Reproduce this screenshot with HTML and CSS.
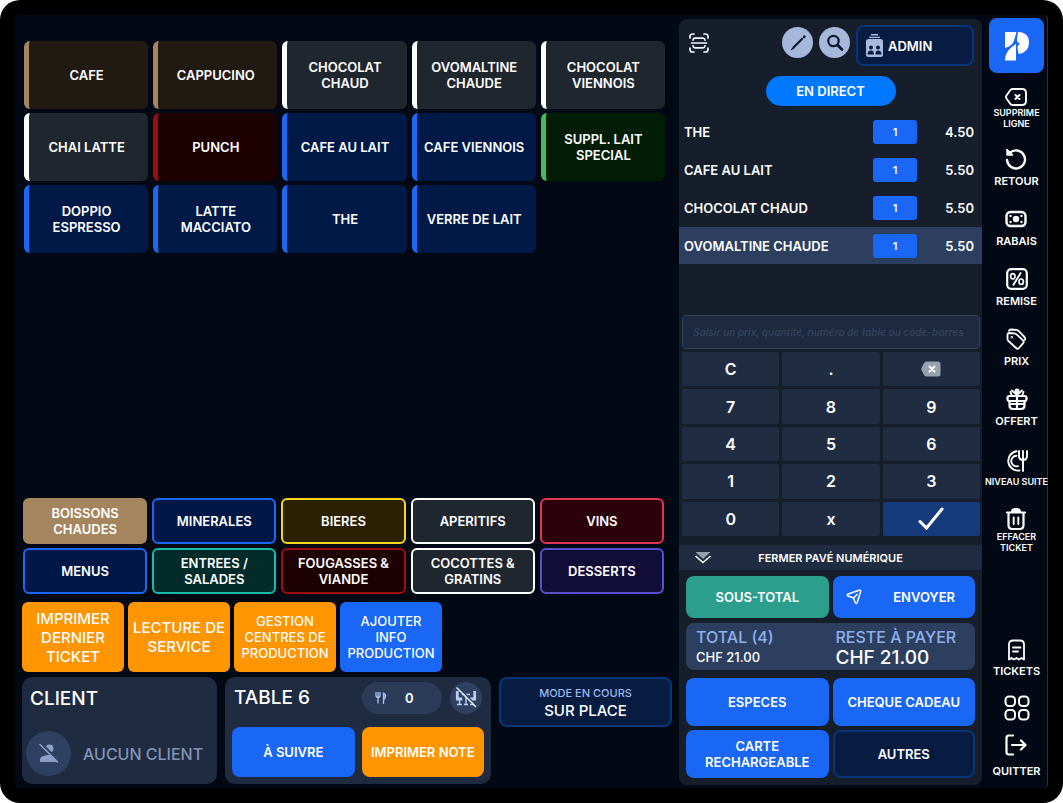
FILE: index.html
```html
<!DOCTYPE html>
<html lang="fr">
<head>
<meta charset="utf-8">
<meta name="viewport" content="width=device-width, initial-scale=1">
<title>Caisse</title>
<link rel="stylesheet" href="styles.css">
</head>
<body>
<div class="device">
<div class="screen">

<main class="work">
  <div class="products">
    <button class="product brown">CAFE</button>
    <button class="product brown">CAPPUCINO</button>
    <button class="product white">CHOCOLAT<br>CHAUD</button>
    <button class="product white">OVOMALTINE<br>CHAUDE</button>
    <button class="product white">CHOCOLAT<br>VIENNOIS</button>
    <button class="product white">CHAI LATTE</button>
    <button class="product red">PUNCH</button>
    <button class="product blue">CAFE AU LAIT</button>
    <button class="product blue">CAFE VIENNOIS</button>
    <button class="product green">SUPPL. LAIT<br>SPECIAL</button>
    <button class="product blue">DOPPIO<br>ESPRESSO</button>
    <button class="product blue">LATTE<br>MACCIATO</button>
    <button class="product blue">THE</button>
    <button class="product blue">VERRE DE LAIT</button>
  </div>

  <nav class="categories">
    <button class="category active">BOISSONS<br>CHAUDES</button>
    <button class="category blue">MINERALES</button>
    <button class="category yellow">BIERES</button>
    <button class="category white">APERITIFS</button>
    <button class="category pink">VINS</button>
    <button class="category blue">MENUS</button>
    <button class="category teal">ENTREES /<br>SALADES</button>
    <button class="category red">FOUGASSES &amp;<br>VIANDE</button>
    <button class="category white">COCOTTES &amp;<br>GRATINS</button>
    <button class="category violet">DESSERTS</button>
  </nav>

  <div class="actions">
    <button class="action large">IMPRIMER<br>DERNIER<br>TICKET</button>
    <button class="action large">LECTURE DE<br>SERVICE</button>
    <button class="action">GESTION<br>CENTRES DE<br>PRODUCTION</button>
    <button class="action info">AJOUTER<br>INFO<br>PRODUCTION</button>
  </div>

  <div class="context">
    <section class="card client">
      <h2>CLIENT</h2>
      <div class="client-row">
        <span class="avatar">
          <svg width="22" height="22" viewBox="0 0 22 22"><circle cx="11.500" cy="5.500" r="4" fill="#8ba0c6"/><path d="M2 19v-2.500c0-3 5-4.500 9-4.500s9 1.500 9 4.500V19z" fill="#8ba0c6"/><path d="M3 0l18 18" stroke="#2f4160" stroke-width="2"/><path d="M1.500 1l18.500 18.500" stroke="#8ba0c6" stroke-width="1.500"/></svg>
        </span>
        <span class="muted">AUCUN CLIENT</span>
      </div>
    </section>
    <section class="card table-card">
      <div class="table-head">
        <h2>TABLE 6</h2>
        <button class="covers">
          <svg width="12" height="12" viewBox="0 0 12 12" fill="none" stroke="#a9c3ea" stroke-width="1.300"><path d="M1 0v3.500q0 2 2 2t2-2V0M3 0v11.500"/><path d="M8.500 12V1q2.500 1 2 3.500-.2 2.500-2 3" fill="#7691bd"/></svg>
          <span>0</span>
        </button>
        <button class="round" aria-label="Libérer la table">
          <svg width="22" height="22" viewBox="0 0 22 22" fill="none" stroke="#b9cdf0"><path d="M2.300 4v8h5M19.700 4v8h-5" stroke-width="2.800"/><path d="M4.500 12v5M2 17.500h5M17.500 12v5M15 17.500h5M7 7.500h8M11 7.500v10M9 17.500h4" stroke-width="1.400"/><path d="M3 0l19 19" stroke="#2f4160" stroke-width="1.500"/><path d="M1.500 0.500l19.500 19.500" stroke="#e5eeff" stroke-width="1.500"/></svg>
        </button>
      </div>
      <div class="table-actions">
        <button class="primary">À SUIVRE</button>
        <button class="primary orange">IMPRIMER NOTE</button>
      </div>
    </section>
    <button class="mode"><span class="mode-label">MODE EN COURS</span><span>SUR PLACE</span></button>
  </div>
</main>

<section class="order">
  <header class="order-head">
    <button class="scan" aria-label="Scanner">
      <svg width="20" height="20" viewBox="0 0 20 20" fill="none" stroke="#f4f8ff" stroke-width="1.700" stroke-linecap="round"><path d="M1 5V3.500q0-2.500 2.500-2.500H5M15 1h1.500q2.500 0 2.500 2.500V5M19 15v1.500q0 2.500-2.500 2.500H15M5 19H3.500q-2.500 0-2.500-2.500V15M2.500 10h15"/><path d="M4 7.200q.3-2 2-2h8q1.700 0 2 2M4 12.800q.3 2 2 2h8q1.700 0 2-2"/></svg>
    </button>
    <button class="tool" aria-label="Modifier">
      <svg width="18" height="18" viewBox="0 0 18 18" stroke="#10192b" stroke-linecap="round"><path d="M4.500 13.500L13 5" stroke-width="2.200"/><path d="M15 3l.4-.4" stroke-width="2.600"/><path d="M2.500 15.500l2-1.500" stroke-width="1.400"/></svg>
    </button>
    <button class="tool" aria-label="Rechercher">
      <svg width="18" height="18" viewBox="0 0 18 18" fill="none" stroke="#10192b" stroke-width="2.200" stroke-linecap="round"><circle cx="7.500" cy="7" r="5.200"/><path d="M11.500 11l4.500 4.500" stroke-width="2.800"/></svg>
    </button>
    <button class="admin">
      <svg width="17" height="23" viewBox="0 0 17 23"><path d="M5 .8h7M3 3.400h11" stroke="#a8bbdf" stroke-width="1.400"/><rect x="0" y="5" width="17" height="18" rx="2.500" fill="#a8bbdf"/><g fill="#0a1c40"><circle cx="5" cy="13.500" r="2"/><circle cx="12" cy="13.500" r="2"/><path d="M1.500 20.500q0-4 3.500-4 2.600 0 3 3v1zM9.500 20.500v-1q.3-3 2.700-3 3.300 0 3.300 4z"/></g></svg>
      <span>ADMIN</span>
    </button>
  </header>
  <button class="direct">EN DIRECT</button>
  <table class="lines">
    <tbody>
      <tr><td>THE</td><td class="qty"><button>1</button></td><td class="price">4.50</td></tr>
      <tr><td>CAFE AU LAIT</td><td class="qty"><button>1</button></td><td class="price">5.50</td></tr>
      <tr><td>CHOCOLAT CHAUD</td><td class="qty"><button>1</button></td><td class="price">5.50</td></tr>
      <tr class="selected"><td>OVOMALTINE CHAUDE</td><td class="qty"><button>1</button></td><td class="price">5.50</td></tr>
    </tbody>
  </table>

  <div class="pad">
    <input class="entry" type="text" aria-label="Saisie" placeholder="Saisir un prix, quantité, numéro de table ou code-barres">
    <div class="keys">
      <button>C</button><button>.</button>
      <button aria-label="Effacer"><svg width="20" height="16" viewBox="0 0 20 16"><path d="M5.500.5H17q2.500 0 2.500 2.500v10q0 2.500-2.500 2.500H5.500Q3.500 15.500 2 12L.5 9q-.5-1 0-2L2 4Q3.500.5 5.500.5z" fill="#98a1ae"/><path d="M8.500 5.500l5 5M13.500 5.500l-5 5" stroke="#fff" stroke-width="2" stroke-linecap="round"/></svg></button>
      <button>7</button><button>8</button><button>9</button>
      <button>4</button><button>5</button><button>6</button>
      <button>1</button><button>2</button><button>3</button>
      <button>0</button><button>x</button>
      <button class="ok" aria-label="Valider"><svg width="26" height="24" viewBox="0 0 26 24"><path d="M2 14.500l6.500 6.500L24 2" fill="none" stroke="#fff" stroke-width="3" stroke-linecap="round"/></svg></button>
    </div>
  </div>
  <button class="fold">
    <svg width="18" height="13" viewBox="0 0 18 13"><path d="M1.500 1h15L9 8z" fill="#98a1ae"/><path d="M1.500 5L9 11.500 16.500 5" fill="none" stroke="#fff" stroke-width="1.600"/></svg>
    <span>FERMER PAVÉ NUMÉRIQUE</span>
  </button>

  <div class="pay">
    <button class="primary teal">SOUS-TOTAL</button>
    <button class="primary send"><svg width="16" height="16" viewBox="0 0 16 16" fill="none" stroke="#fff" stroke-width="1.500" stroke-linejoin="round" stroke-linecap="round"><path d="M2.200 5L13 1.200q2-.4 1.600 1.500L11.200 13.500q-.9 2-2 0L7.500 9 2.200 7q-2-1 0-2zM7.500 9L11 5.500"/></svg><span>ENVOYER</span></button>
    <dl class="totals">
      <div><dt>TOTAL (4)</dt><dd>CHF 21.00</dd></div>
      <div class="due"><dt>RESTE À PAYER</dt><dd>CHF 21.00</dd></div>
    </dl>
    <button class="primary tall">ESPECES</button>
    <button class="primary tall">CHEQUE CADEAU</button>
    <button class="primary tall">CARTE<br>RECHARGEABLE</button>
    <button class="primary tall outline">AUTRES</button>
  </div>
</section>

<aside class="rail">
  <button class="logo" aria-label="Accueil">
    <svg width="26" height="30" viewBox="0 0 26 30"><path d="M1 1h11.500L10 9.500Q8.500 15 1 17z" fill="#fff"/><path d="M14 1q11 .5 11 10.500T14.500 23l-1-6.500q0-2 2.500-4-3.500-1-3-4.500z" fill="#fff"/><path d="M1 29.500Q1 19 12 13v16.500z" fill="#fff"/></svg>
  </button>
  <button class="item small">
    <svg width="22" height="18" viewBox="0 0 22 18" fill="none" stroke="#fff" stroke-linecap="round" stroke-linejoin="round"><path d="M7.500 1H17q4 0 4 4v8q0 4-4 4H7.500q-1.500 0-2.500-1.500L1.500 10.500q-1-1.500 0-3L5 2.500Q6 1 7.500 1z" stroke-width="1.900"/><path d="M10.500 7l4 4M14.500 7l-4 4" stroke-width="2"/></svg>
    <span>SUPPRIME<br>LIGNE</span>
  </button>
  <button class="item">
    <svg width="22" height="22" viewBox="0 0 22 22" fill="none" stroke="#fff" stroke-width="2.400" stroke-linecap="round"><path d="M5 4.700A9 9 0 1 1 2 12"/><path d="M2 1.500V7h5.500z" fill="#fff" stroke-width="1.500" stroke-linejoin="round"/></svg>
    <span>RETOUR</span>
  </button>
  <button class="item">
    <svg width="22" height="22" viewBox="0 0 22 22"><rect x="1.500" y="4" width="19" height="14" rx="4" fill="none" stroke="#fff" stroke-width="2.400"/><circle cx="11" cy="11" r="3.200" fill="#fff"/><g fill="#fff"><circle cx="5.500" cy="8" r="1.200"/><circle cx="16.500" cy="8" r="1.200"/><circle cx="5.500" cy="14" r="1.200"/><circle cx="16.500" cy="14" r="1.200"/></g></svg>
    <span>RABAIS</span>
  </button>
  <button class="item">
    <svg width="22" height="22" viewBox="0 0 22 22" fill="none" stroke="#fff" stroke-width="2.200"><rect x="1.200" y="1.200" width="19.600" height="19.600" rx="4"/><path d="M15 4.500L7 17.500" stroke-width="1.900"/><ellipse cx="6.800" cy="8.300" rx="2.200" ry="2.700" stroke-width="1.700"/><ellipse cx="15.200" cy="13.700" rx="2.200" ry="2.700" stroke-width="1.700"/></svg>
    <span>REMISE</span>
  </button>
  <button class="item">
    <svg width="22" height="22" viewBox="0 0 22 22" fill="none" stroke="#fff" stroke-width="1.800" stroke-linejoin="round" stroke-linecap="round"><path d="M2.500 7q0-2 2-2l5 .3q1 0 2 1l6.500 6q1.500 1.500 0 3L14 20q-1.500 1.500-3 0L3.500 13q-1-1-1-2z"/><path d="M4 2.800Q4.500 1.500 6 1.500l5.500.3q1 0 2 1L19.500 9q1 1.200.5 2.800"/><circle cx="6.800" cy="9.300" r=".4"/></svg>
    <span>PRIX</span>
  </button>
  <button class="item">
    <svg width="22" height="22" viewBox="0 0 22 22" fill="none" stroke="#fff" stroke-width="2.200" stroke-linejoin="round" stroke-linecap="round"><rect x="1.500" y="8" width="19" height="5" rx="2"/><path d="M3.500 13v4.500q0 3.500 3.500 3.500h8q3.500 0 3.500-3.500V13M11 3v18M4 16h14"/><path d="M11 7L6 2.500M11 7l5-4.500M5.500 6.500L4.500 4M16.500 6.500l1-2.500" stroke-width="1.900"/><circle cx="11" cy="3" r="2.500" fill="#fff" stroke="none"/></svg>
    <span>OFFERT</span>
  </button>
  <button class="item small course">
    <svg width="22" height="22" viewBox="0 0 22 22" fill="none" stroke="#fff" stroke-width="1.900" stroke-linecap="round"><path d="M10.500 1.300a9.700 9.700 0 1 0 3 19.200M10.500 5.800a5.300 5.300 0 1 0 1.500 10.400"/><path d="M13 1v5q0 4 4 4t4-4V1M17 1v20"/></svg>
    <span>NIVEAU SUITE</span>
  </button>
  <button class="item small">
    <svg width="22" height="22" viewBox="0 0 22 22" fill="none" stroke="#fff" stroke-width="2.200" stroke-linecap="round"><path d="M2 4.500h18M7 4q0-3 4-3t4 3z" fill="#fff"/><path d="M3.500 5v12q0 4 4 4h7q4 0 4-4V5"/><path d="M8.700 9.500v6.500M13.300 9.500v6.500" stroke-width="1.900"/></svg>
    <span>EFFACER<br>TICKET</span>
  </button>
  <button class="item tickets">
    <svg width="22" height="22" viewBox="0 0 22 22" fill="none" stroke="#fff" stroke-width="1.800" stroke-linejoin="round" stroke-linecap="round"><path d="M4 20.500V5.500Q4 1.500 8 1.500h7q4 0 4 4v15l-2.500-1.500-2.500 1.500-2.500-1.500L9 20.500 6.500 19zM8 8.500h7.500M8 12.500h5"/></svg>
    <span>TICKETS</span>
  </button>
  <button class="grid-button" aria-label="Menu">
    <svg width="26" height="26" viewBox="0 0 26 26" fill="none" stroke="#fff" stroke-width="2"><rect x="1.500" y="1.500" width="9.500" height="9.500" rx="3.500"/><rect x="15" y="1.500" width="9.500" height="9.500" rx="3.500"/><rect x="1.500" y="15" width="9.500" height="9.500" rx="3.500"/><rect x="15" y="15" width="9.500" height="9.500" rx="3.500"/></svg>
  </button>
  <button class="item quit">
    <svg width="22" height="22" viewBox="0 0 22 22" fill="none" stroke="#fff" stroke-width="2.200" stroke-linecap="round" stroke-linejoin="round"><path d="M8 1.500H4q-2.500 0-2.500 2.500v14q0 2.500 2.500 2.500h4M7 11h13.500M16 6.500l4.500 4.500-4.500 4.500"/></svg>
    <span>QUITTER</span>
  </button>
</aside>

</div>
</div>
</body>
</html>
```

FILE: styles.css
```css
* { box-sizing: border-box; }

body {
  margin: 0;
  background: #fff;
  color: #fff;
  font: 600 13px/16px Inter, "Liberation Sans", sans-serif;
}

button {
  margin: 0;
  padding: 0;
  border: 0;
  background: none;
  color: inherit;
  font: inherit;
  cursor: pointer;
}

h2, dl, dd { margin: 0; }
h2 { font-size: 19px; line-height: 24px; font-weight: 500; }
svg { display: block; flex: none; }

.device {
  display: flex;
  min-height: 100vh;
  padding: 15px;
  background: #000;
  border-radius: 20px;
}

.screen {
  flex: 1;
  display: grid;
  grid-template-columns: minmax(0, 664fr) minmax(0, 303fr) 65px;
  background: #020814;
  border-right: 1px solid #2b313c;
  border-radius: 4px;
}

/* Product side */
.work {
  display: flex;
  flex-direction: column;
  padding: 26px 7px 4px;
}

.products, .categories {
  display: grid;
  grid-template-columns: repeat(5, 1fr);
  gap: 4px 5px;
}
.products { grid-auto-rows: 68px; padding: 0 7px 0 2px; }
.categories { grid-auto-rows: 46px; margin-top: auto; padding: 0 8px 0 1px; }

.product { border-left: 5px solid; border-radius: 6px; padding-right: 4px; }
.product.brown { border-color: #a5855d; background: #211a13; }
.product.white { border-color: #fff; background: #20262d; }
.product.red { border-color: #980d0d; background: #1d0101; }
.product.blue { border-color: #1d68f3; background: #001947; }
.product.green { border-color: #3fbd5c; background: #021d06; }

.category { border: 2px solid; border-radius: 6px; }
.category.active { border-color: #a5855d; background: #a5855d; }
.category.blue { border-color: #1d68f3; background: #001747; }
.category.yellow { border-color: #f5d61f; background: #2b2102; }
.category.white { border-color: #fff; background: #20262d; }
.category.pink { border-color: #df3553; background: #2b020b; }
.category.teal { border-color: #18bca6; background: #022b29; }
.category.red { border-color: #9d0e12; background: #1e0203; }
.category.violet { border-color: #5a50c9; background: #120d38; }

.actions {
  display: grid;
  grid-template-columns: repeat(4, 102px);
  gap: 4px;
  padding-top: 8px;
}
.action { height: 70px; border-radius: 6px; background: #ff9500; font-weight: 500; }
.action.large { font-size: 15px; line-height: 19px; }
.action.info { background: #1967f4; }

.context {
  display: grid;
  grid-template-columns: 195fr 266fr 173fr;
  column-gap: 8px;
  padding-top: 5px;
}
.card {
  display: flex;
  flex-direction: column;
  justify-content: space-between;
  height: 107px;
  border-radius: 10px;
  background: #1f2b40;
}
.client { padding: 10px 4px 8px; }
.client h2 { padding-left: 4px; }
.client-row { display: flex; align-items: center; gap: 12px; }
.avatar {
  display: grid;
  place-items: center;
  width: 45px;
  height: 45px;
  border-radius: 50%;
  background: #2f4160;
}
.muted { color: #8294b7; font-size: 16px; line-height: 20px; font-weight: 500; }

.table-card { padding: 5px 7px 7px; }
.table-head { display: flex; align-items: center; gap: 8px; padding: 0 2px; }
.table-head h2 { flex: 1; }
.covers {
  display: flex;
  align-items: center;
  gap: 18px;
  width: 80px;
  height: 32px;
  padding-left: 13px;
  border-radius: 16px;
  background: #2b3c59;
}
.round { display: grid; place-items: center; width: 32px; height: 32px; border-radius: 50%; background: #2f4160; }
.table-actions { display: grid; grid-template-columns: 1fr 1fr; gap: 7px; }
.table-actions .primary { height: 50px; }

.primary { height: 42px; border-radius: 8px; background: #1967f4; white-space: nowrap; }
.primary.orange { background: #ff9500; }
.primary.teal { background: #2b9e8e; }
.primary.tall { height: 48px; }
.primary.outline { border: 2px solid #063579; background: #071c40; }

.mode {
  display: flex;
  flex-direction: column;
  align-items: center;
  justify-content: center;
  gap: 2px;
  height: 50px;
  border: 2px solid #063579;
  border-radius: 8px;
  background: #071c40;
  font-size: 15px;
  font-weight: 500;
}
.mode-label { color: #9bb9ee; font-size: 11px; }

/* Ticket panel */
.order {
  display: flex;
  flex-direction: column;
  margin: 4px 0 3px;
  border-radius: 8px;
  background: #151e2a;
}
.order-head { display: flex; align-items: flex-start; gap: 6px; padding: 6px 8px 0 10px; }
.scan { margin: 8px auto 0 0; }
.tool { display: grid; place-items: center; width: 31px; height: 31px; margin-top: 2px; border-radius: 50%; background: #a5b8dc; }
.admin {
  display: flex;
  align-items: center;
  gap: 5px;
  width: 118px;
  height: 41px;
  padding-left: 8px;
  border: 2px solid #063579;
  border-radius: 8px;
  background: #071c40;
}
.direct {
  align-self: center;
  width: 130px;
  height: 30px;
  margin: 10px 0 6px;
  border-radius: 15px;
  background: #0078ff;
}

.lines { width: 100%; border-collapse: separate; border-spacing: 0 1px; }
.lines td { height: 37px; padding: 0 0 0 5px; }
.lines .qty { width: 60px; padding: 0; }
.lines .price { width: 49px; padding: 0 8px 0 0; text-align: right; }
.qty button { display: block; width: 44px; height: 24px; border-radius: 3px; background: #1967f4; font-size: 11px; }
.selected td { background: #2d3f5e; }

.pad { margin-top: auto; padding: 0 2px 9px 3px; }
.entry {
  display: block;
  width: 100%;
  height: 34px;
  padding: 0 0 0 10px;
  border: 1px solid #34435b;
  border-radius: 4px;
  background: #1c293f;
  color: #fff;
  font: italic 600 10px/16px Inter, sans-serif;
}
.entry::placeholder { color: #34425b; opacity: 1; }
.keys {
  display: grid;
  grid-template-columns: repeat(3, 1fr);
  grid-auto-rows: 1fr;
  gap: 3px;
  height: 187px;
  padding-top: 3px;
}
.keys button {
  display: grid;
  place-items: center;
  border-radius: 2px;
  background: #1f2c42;
  font-size: 16px;
}
.keys .ok { background: #153b7c; }

.fold {
  display: grid;
  grid-template-columns: 18px 1fr 18px;
  align-items: center;
  height: 25px;
  padding: 0 15px;
  background: #1f2c42;
  font-size: 11px;
}

.pay {
  display: grid;
  grid-template-columns: 1fr 1fr;
  gap: 4px;
  padding: 6px 7px 7px;
}
.send { display: grid; grid-template-columns: 16px 1fr; align-items: center; padding: 0 20px 0 13px; text-align: right; }
.totals {
  grid-column: 1 / -1;
  display: grid;
  grid-template-columns: 1fr 1fr;
  margin: 1px 0 4px;
  padding: 4px 0 2px 10px;
  border-radius: 8px;
  background: #2d3f5e;
  font-weight: 500;
}
.totals dt { color: #8eb0ee; font-size: 16px; line-height: 20px; white-space: nowrap; }
.totals dd { font-size: 13px; line-height: 20px; }
.totals .due dd { font-size: 19px; line-height: 21px; }

/* Function rail */
.rail {
  display: flex;
  flex-direction: column;
  align-items: center;
  padding: 3px 0 9px 4px;
  font-size: 11px;
  line-height: 14px;
}
.logo { display: grid; place-items: center; width: 55px; height: 55px; margin-bottom: 15px; border-radius: 8px; background: #1967f4; }
.item { display: flex; flex-direction: column; align-items: center; justify-content: flex-start; gap: 4px; height: 60px; white-space: nowrap; }
.item.small { gap: 1px; font-size: 9px; line-height: 11px; }
.item.course { gap: 4px; padding-top: 2px; }
.tickets { margin-top: auto; height: 41px; gap: 3px; }
.grid-button { margin: 15px 0 13px; }
.quit { height: 45px; gap: 8px; }
```
